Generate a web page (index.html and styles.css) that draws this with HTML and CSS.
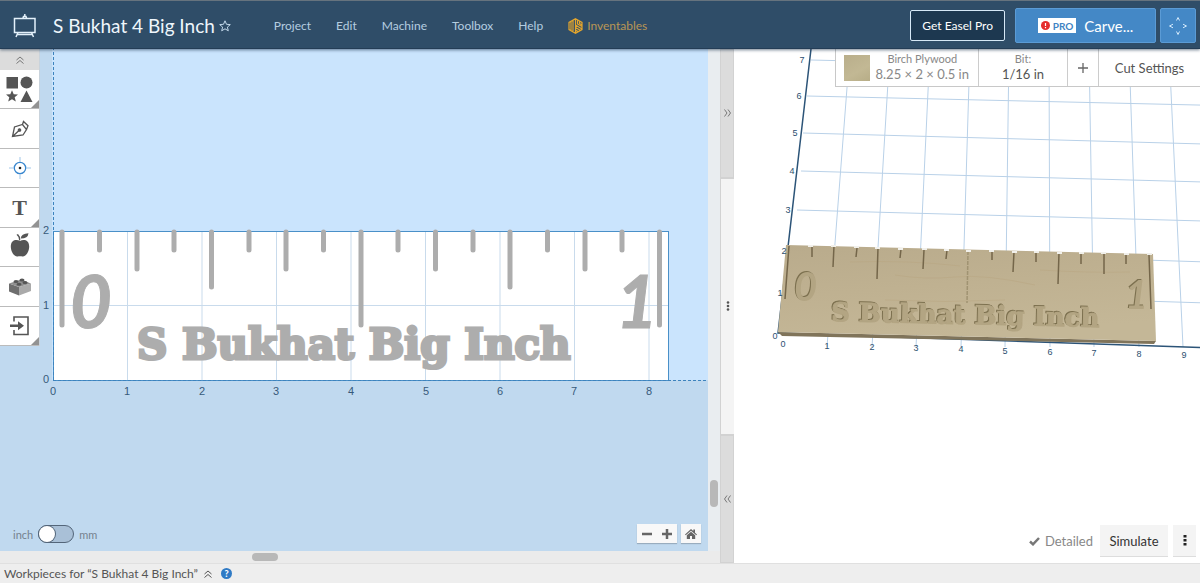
FILE: index.html
```html
<!DOCTYPE html>
<html lang="en">
<head>
<meta charset="utf-8">
<title>S Bukhat 4 Big Inch</title>
<link rel="stylesheet" href="styles.css">
</head>
<body>
<header class="topbar">
  <a class="logo" href="#" aria-label="Home">
    <svg width="24" height="24" viewBox="0 0 24 24" fill="none" stroke="#e4f1fb" stroke-width="1.5"><path d="M1.500 4.500h20.500v14H1.500zM10 4l.5-1.500h2.500l.5 1.500M11.800 0v3M5 18.500l-2 4.500M18.500 18.500l2 4.500M4 20.500h15.500"/></svg>
  </a>
  <h1 class="title">S Bukhat 4 Big Inch</h1>
  <button class="star" aria-label="Favorite"><svg width="12" height="12" viewBox="0 0 12 12" fill="none" stroke="#c3d9eb" stroke-linejoin="round"><path d="M6 .8l1.500 3.500 3.800.3-2.900 2.500.9 3.700L6 8.800l-3.300 2 .9-3.700L.7 4.600l3.800-.3z"/></svg></button>
  <nav class="menu">
    <a href="#">Project</a><a href="#">Edit</a><a href="#">Machine</a><a href="#">Toolbox</a><a href="#">Help</a>
    <a class="brand" href="#"><svg width="15" height="16" viewBox="0 0 15 16" fill="none" stroke="#e5a62c" stroke-width="1.200"><path d="M7.500.7l6.500 3.700v7.200l-6.500 3.700L1 11.600V4.400zM3 3.500v9M5 2.500v10.500M7.500 1v6l6.500 4M7.500 9.500l5 3M7.500 12l3.500 2M7.500 7.500V15M9.500 2.500v3.500l4.500 2.600M11.500 3.500v2l2.500 1.400"/></svg>Inventables</a>
  </nav>
  <div class="actions">
    <button class="pro-button">Get Easel Pro</button>
    <button class="carve"><span class="badge"><svg width="9" height="9" viewBox="0 0 9 9"><circle cx="4.500" cy="4.500" r="4.500" fill="#e52e2e"/><path d="M4.500 2v3M4.500 6v1.200" stroke="#fff" stroke-width="1.200"/></svg>PRO</span>Carve...</button>
    <button class="jog" aria-label="Jog machine"><svg width="18" height="18" viewBox="0 0 18 18" fill="none" stroke="#d3e9fb" stroke-width="1"><path d="M7.500 3.500L9 .5l1.500 3M7.500 14.500l1.500 3 1.500-3M4 7.200L.5 9 4 10.800M14 7.200L17.500 9 14 10.800"/></svg></button>
  </div>
</header>

<main class="workspace">
  <section class="editor">
    <div class="canvas">
      <svg class="drawing" width="100%" height="100%">
        <rect class="outside" width="100%" height="100%"/>
        <rect class="quadrant" x="52" y="0" width="100%" height="331"/>
        <g transform="translate(53 331)">
          <rect x="0" y="-149" width="615" height="149" fill="#fff"/>
          <path class="grid" d="M74.500-149V0M149-149V0M223.500-149V0M298-149V0M372.500-149V0M447-149V0M521.500-149V0M596-149V0M0-74.500H615"/>
          <rect class="stock" x="0" y="-149" width="615" height="149"/>
          <line class="axis" x1="0" y1="0" x2="0" y2="-340"/>
          <line class="axis" x1="0" y1="0" x2="100%" y2="0"/>
          <path class="ticks" d="M9-148v93M46.500-148v18M84-148v37M121-148v18M158.500-148v55M196-148v18M233-148v37M270.500-148v18M308-148v93M345-148v18M382.500-148v37M420-148v18M457-148v55M494.500-148v18M532-148v37M569-148v18M606.500-148v93"/>
          <text class="numeral" x="17" y="-52">0</text>
          <text class="numeral" x="563" y="-52">1</text>
          <text class="engraving" x="84" y="-21">S Bukhat Big Inch</text>
          <g class="scale across"><text x="0" y="15">0</text><text x="74" y="15">1</text><text x="149" y="15">2</text><text x="223" y="15">3</text><text x="298" y="15">4</text><text x="373" y="15">5</text><text x="447" y="15">6</text><text x="521" y="15">7</text><text x="596" y="15">8</text></g>
          <g class="scale up"><text x="-4" y="3">0</text><text x="-4" y="-71">1</text><text x="-4" y="-146">2</text></g>
        </g>
      </svg>

      <div class="toolbox">
        <button class="collapse" aria-label="Collapse tools"><svg width="8" height="8" viewBox="0 0 8 8" fill="none" stroke="#777"><path d="M.5 4L4 1l3.500 3M.5 7.500L4 4.500l3.500 3"/></svg></button>
        <button class="tool more" aria-label="Shapes"><svg width="27" height="27" viewBox="0 0 27 27" fill="#555"><path d="M.5 1h11.500v11.500H.5zM20.500 14.500l6 11.500h-12zM6 14.200l1.700 4 4.300.3-3.300 2.800 1.100 4.300L6 23.200l-3.800 2.400 1.100-4.300L0 18.500l4.300-.3z"/><circle cx="20.500" cy="6.500" r="6"/></svg></button>
        <button class="tool" aria-label="Pen"><svg width="18" height="18" viewBox="0 0 18 18" fill="none" stroke="#555" stroke-width="1.300"><path d="M1.500 16.500L3.500 7l8-2.500 4 5L12 15zM11.500 4.500l1-3 4.500 4.200-1.500 3.800M1.500 16.500L8 10.500"/><circle cx="8.500" cy="10" r="1.200" fill="#555"/></svg></button>
        <button class="tool" aria-label="Drill point"><svg width="22" height="22" viewBox="0 0 22 22" fill="none" stroke="#3987cf"><circle cx="11" cy="11" r="5.700" stroke-width="1.300"/><path stroke="#9fc5e8" d="M11 0v5M11 17v5M0 11h5M17 11h5"/><circle cx="11" cy="11" r="1.300" fill="#222" stroke="none"/></svg></button>
        <button class="tool more letter" aria-label="Text">T</button>
        <button class="tool" aria-label="Design library"><svg width="20" height="28" viewBox="0 0 20 28" fill="#555"><path d="M10 8C7 6 .8 6.300.8 13.500.8 19 4.500 24 7.500 23.500c1.500-.3 3.500-.3 5 0 3 .5 6.700-4.500 6.700-10C19.200 6.300 13 6 10 8zM9 7.500Q9.300 4 6.500 1.800L8 1q2.300 2 2.300 6zM10.800 5.500Q11 .8 18.500.3 18 5.500 10.800 5.500z"/></svg></button>
        <button class="tool" aria-label="Apps"><svg width="22" height="18" viewBox="0 0 22 18"><path fill="#6e6e6e" d="M0 5.500l10 3.500v8.500L0 13.500z"/><path fill="#aaa" d="M10 9l12-3.500V13l-12 4.500z"/><path fill="#8f8f8f" d="M0 5.500L12 1.500l10 4L10 9z"/><g fill="#555"><ellipse cx="7" cy="3.500" rx="2.500" ry="1.500"/><ellipse cx="13" cy="2" rx="2.500" ry="1.500"/><ellipse cx="10" cy="6.200" rx="2.500" ry="1.500"/><ellipse cx="16" cy="4.500" rx="2.500" ry="1.500"/></g></svg></button>
        <button class="tool more" aria-label="Import"><svg width="20" height="20" viewBox="0 0 20 20" fill="none" stroke="#555" stroke-width="1.600"><path d="M4 5.500V1h14v17.500H4V14"/><path fill="#555" stroke="none" d="M0 8.500h8V5.300l6 4.500-6 4.500v-3.200H0z"/></svg></button>
      </div>

      <div class="units">
        <label for="unit">inch</label>
        <input id="unit" class="switch" type="checkbox" role="switch">
        <label for="unit">mm</label>
      </div>

      <div class="zoom">
        <div class="zoom-pair">
          <button aria-label="Zoom out"><svg width="10" height="10"><path d="M0 5h10" stroke="#666" stroke-width="2.500"/></svg></button>
          <button aria-label="Zoom in"><svg width="10" height="10"><path d="M0 5h10M5 0v10" stroke="#666" stroke-width="2.500"/></svg></button>
        </div>
        <button class="home" aria-label="Reset view"><svg width="12" height="10" viewBox="0 0 12 10" fill="#666"><path d="M0 5.500L6 0l2.300 2V.5H10v3.200l2 1.800-.7.700L6 1.700.7 6.200zM1.800 6.200L6 2.700l4.200 3.500V10H7V7H5v3H1.800z"/></svg></button>
      </div>
    </div>
    <div class="track vertical"><span class="thumb"></span></div>
    <div class="track horizontal"><span class="thumb"></span></div>
    <div class="splitter">
      <button aria-label="Expand editor"><svg width="7" height="8" viewBox="0 0 7 8" fill="none" stroke="#777"><path d="M.5.500l2.500 3.500L.5 7.500M4 .5l2.500 3.500L4 7.500"/></svg></button>
      <button class="grip" aria-label="Resize panels"><svg width="4" height="10" fill="#555"><circle cx="2" cy="1.500" r="1.300"/><circle cx="2" cy="5" r="1.300"/><circle cx="2" cy="8.500" r="1.300"/></svg></button>
      <button aria-label="Expand preview"><svg width="7" height="8" viewBox="0 0 7 8" fill="none" stroke="#777"><path d="M3 .5L.5 4 3 7.500M6.500.500L4 4l2.500 3.500"/></svg></button>
    </div>
  </section>

  <section class="preview">
    <svg class="scene" width="100%" height="100%">
      <defs>
        <linearGradient id="wood" x1="0" y1="0" x2=".3" y2="1"><stop offset="0" stop-color="#b9ab8c"/><stop offset=".5" stop-color="#bfb191"/><stop offset="1" stop-color="#c4b797"/></linearGradient>
      </defs>
      <g transform="translate(-734 -49)">
        <path class="grid3d" d="M850 49L827 347M890 49L872 347M930 49L916 347M970 49L961 347M1009 49L1005 347M1049 49L1050 347M1089 49L1094 347M1129 49L1139 347M1169 49L1183 347M1209 49L1228 347M783 290L1240 304M788 249L1240 263M797 210L1240 222M801 171L1240 183M803 133L1240 145M807 96L1240 106M811 60L1240 70"/>
        <path class="axis3d" d="M811 49L778 333L1240 349"/>
        <path fill="#80745a" d="M778 332L1156 341L1154 344L782 336z"/>
        <path fill="url(#wood)" d="M786 245L1153 254L1156 341L778 332z"/>
        <path class="woodgrain" d="M895 275q30 5 60 2t80 8M850 262q60-2 110 4M1040 270q50 3 90 2M885 300q60 3 120 0"/>
        <path class="groove" d="M789 246L785 299M812 247V257M834 246L833 267M857 248L856 257M878 248L877 279M901 249L900 258M924 250L923 269M947 250L946 259M992 251V260M1014 252L1013 272M1036 252V262M1059 253L1058 284M1081 253V264M1104 254V274M1126 254V264M1149 255L1151 309"/>
        <path class="groove faint" d="M968 251L967 303"/>
        <path class="notch" d="M808 246h5M831 246h5M854 247h5M875 248h5M898 249h5M922 249h5M944 250h5M966 251h5M989 251h5M1012 252h5M1034 252h5M1057 253h5M1079 253h5M1101 253h5M1124 254h5M1147 254h5"/>
        <g class="carved">
          <text class="carved-num" x="794" y="301">0</text>
          <text class="carved-num" x="1125" y="309">1</text>
          <text class="carved-text" x="831" y="321" transform="rotate(1.300 831 321)">S Bukhat Big Inch</text>
        </g>
        <g class="scale3d">
          <text x="783" y="347">0</text><text x="827" y="349">1</text><text x="872" y="350">2</text><text x="916" y="351">3</text><text x="961" y="352">4</text><text x="1005" y="354">5</text><text x="1050" y="355">6</text><text x="1094" y="356">7</text><text x="1139" y="357">8</text><text x="1184" y="358">9</text>
          <text x="775" y="339">0</text><text x="780" y="296">1</text><text x="784" y="254">2</text><text x="788" y="213">3</text><text x="792" y="174">4</text><text x="795" y="136">5</text><text x="799" y="99">6</text><text x="802" y="63">7</text>
        </g>
      </g>
    </svg>
    <div class="settings">
      <button class="material"><span class="swatch"></span><span class="stack"><small>Birch Plywood</small><span>8.25 × 2 × 0.5 in</span></span></button>
      <button class="bit stack"><small>Bit:</small><span>1/16 in</span></button>
      <button class="add" aria-label="Add bit"><svg width="10" height="10"><path d="M0 5h10M5 0v10" stroke="#666" stroke-width="1.300"/></svg></button>
      <button class="cut">Cut Settings</button>
    </div>
    <div class="simulation">
      <button class="detailed"><svg width="11" height="9" viewBox="0 0 11 9" fill="none" stroke="#777" stroke-width="2.500"><path d="M1 4.500L4 7.300 10 1"/></svg>Detailed</button>
      <button class="simulate">Simulate</button>
      <button class="options" aria-label="More options"><svg width="4" height="11" fill="#222"><path d="M.5 0h3v2.600h-3zM.5 4h3v2.600h-3zM.5 8h3v2.600h-3z"/></svg></button>
    </div>
  </section>
</main>

<footer class="workpieces">
  <span>Workpieces for “S Bukhat 4 Big Inch”</span>
  <button aria-label="Expand workpieces"><svg width="8" height="8" viewBox="0 0 8 8" fill="none" stroke="#555"><path d="M.5 4L4 1l3.500 3M.5 7.500L4 4.500l3.500 3"/></svg></button>
  <button class="help" aria-label="Help">?</button>
</footer>
</body>
</html>
```
FILE: styles.css
```css
* { box-sizing: border-box; }
body {
  margin: 0;
  height: 100vh;
  display: flex;
  flex-direction: column;
  overflow: hidden;
  font-family: Lato, sans-serif;
  font-size: 13px;
  color: #555;
}
button {
  margin: 0;
  padding: 0;
  border: 0;
  background: none;
  color: inherit;
  font: inherit;
  display: flex;
  align-items: center;
  justify-content: center;
}
svg { display: block; flex: none; }

/* Header */
.topbar {
  flex: none;
  height: 49px;
  display: flex;
  align-items: center;
  padding: 2px 4px 0 13px;
  background: #2f4d68;
  border-top: 1px solid #66737e;
  border-bottom: 1px solid #243d56;
  box-shadow: 0 1px 3px rgba(20, 45, 70, .6);
  position: relative;
  z-index: 2;
}
.title {
  margin: 0 4px 0 16px;
  font-size: 19px;
  line-height: 24px;
  font-weight: 400;
  color: #eef6fc;
  white-space: nowrap;
}
.menu {
  display: flex;
  align-items: center;
  gap: 25px;
  margin-left: 43px;
  font-size: 12px;
}
.menu a { color: #b5cde0; text-decoration: none; }
.menu .brand {
  display: flex;
  align-items: center;
  gap: 4px;
  color: #b99655;
}
.actions { display: flex; align-items: center; margin-left: auto; }
.actions button { color: #fff; }
.pro-button {
  height: 31px;
  padding: 0 11px;
  margin-right: 10px;
  border: 1px solid #d6e8f6;
  border-radius: 2px;
  background: #1d3850;
  font-size: 12px;
}
.carve {
  width: 141px;
  height: 35px;
  margin-right: 4px;
  gap: 8px;
  border: 1px solid #5b9bd5;
  border-radius: 2px;
  background: #4488c6;
  font-size: 15px;
}
.badge {
  display: flex;
  align-items: center;
  gap: 3px;
  height: 15px;
  padding: 0 3px;
  background: #fff;
  color: #4084c4;
  font-size: 10px;
  font-weight: 700;
}
.jog {
  width: 36px;
  height: 35px;
  border: 1px solid #5b9bd5;
  border-radius: 2px;
  background: #4488c6;
}

/* Workspace */
.workspace {
  flex: 1;
  min-height: 0;
  display: grid;
  grid-template-columns: minmax(0, 734fr) minmax(0, 466fr);
}
.editor {
  display: grid;
  grid-template: minmax(0, 1fr) 12px / minmax(0, 1fr) 12px 14px;
  background: #e9ebed;
}
.canvas { position: relative; overflow: hidden; }
.drawing, .scene { position: absolute; inset: 0; }
.outside { fill: #c0d9ef; }
.quadrant { fill: #cae4fd; }
.grid { stroke: #c9dbec; fill: none; }
.stock { fill: none; stroke: #4a90c8; stroke-width: 1; shape-rendering: crispEdges; }
.axis { stroke: #3d83bd; stroke-dasharray: 3 2; shape-rendering: crispEdges; }
.ticks { stroke: #adadad; stroke-width: 5; stroke-linecap: round; }
.numeral {
  font: italic 700 72px Lato, sans-serif;
  fill: #adadad;
  stroke: #adadad;
  stroke-width: 1px;
}
.engraving {
  font: 700 42px "DejaVu Serif", serif;
  fill: #adadad;
  stroke: #adadad;
  stroke-width: 3px;
}
.scale { font: 11px "Liberation Sans", sans-serif; fill: #37597a; }
.across { text-anchor: middle; }
.up { text-anchor: end; }

.toolbox {
  position: absolute;
  left: 0;
  top: 0;
  width: 40px;
  display: flex;
  flex-direction: column;
  background: #fff;
  border-right: 1px solid #c9d3dc;
}
.collapse { height: 21px; background: #dcdcdc; }
.tool {
  height: 40px;
  border-bottom: 1px solid #bbb;
  position: relative;
}
.tool:nth-child(even) { height: 39px; }
.more::after {
  content: "";
  position: absolute;
  right: 0;
  bottom: 0;
  border: 4px solid #929292;
  border-left-color: transparent;
  border-top-color: transparent;
}
.letter { font: 700 22px "Liberation Serif", serif; }

.units {
  position: absolute;
  left: 13px;
  bottom: 8px;
  display: flex;
  align-items: center;
  gap: 5px;
  font-size: 11px;
  color: #75828e;
}
.switch {
  appearance: none;
  width: 36px;
  height: 18px;
  margin: 0;
  border: 1px solid #536579;
  border-radius: 9px;
  background: #a9c0d7;
}
.switch::before {
  content: "";
  display: block;
  width: 16px;
  height: 16px;
  border-radius: 8px;
  background: #fff;
  box-shadow: 0 0 0 1px #536579;
}
.switch:checked::before { margin-left: auto; }

.zoom {
  position: absolute;
  right: 7px;
  bottom: 8px;
  display: flex;
  gap: 4px;
}
.zoom button { width: 20px; height: 19px; background: #f8f8f8; }
.zoom-pair { display: flex; }
.zoom-pair, .home { box-shadow: 0 1px 1px rgba(0, 0, 0, .2); }

.track { display: flex; background: #e9edf0; }
.track .thumb { background: #b8b8b8; border-radius: 4px; }
.vertical { grid-column: 2; grid-row: 1; flex-direction: column; align-items: center; justify-content: flex-end; padding-bottom: 44px; }
.vertical .thumb { width: 8px; height: 27px; }
.horizontal { grid-column: 1 / 3; grid-row: 2; align-items: center; padding-left: 35%; background: #ebebeb; }
.horizontal .thumb { width: 26px; height: 8px; }
.splitter {
  grid-column: 3;
  grid-row: 1 / 3;
  display: grid;
  grid-template-rows: 1fr 2fr 1fr;
}
.splitter button { background: #dcdcdc; border: 1px solid #d2d2d2; }
.splitter .grip { background: #f4f4f4; border-right: 0; }

/* 3D preview */
.preview { position: relative; overflow: hidden; background: #fff; }
.grid3d { stroke: #b9d1e8; fill: none; }
.axis3d { stroke: #2c5478; stroke-width: 1.5; fill: none; }
.woodgrain { stroke: #b6a27d; stroke-width: 1; opacity: .4; fill: none; }
.groove { stroke: #74664a; stroke-width: 1.5; fill: none; }
.faint { stroke: #a09372; stroke-dasharray: 4 1; }
.notch { stroke: #f1f0eb; stroke-width: 2; fill: none; }
.carved {
  filter: drop-shadow(-1px -1px 0 #7c704f);
  fill: #b3a583;
}
.carved-num { font: italic 700 40px Lato, sans-serif; }
.carved-text {
  font: 700 26px "DejaVu Serif", serif;
  stroke: #b3a583;
  stroke-width: 1px;
}
.scale3d { font: 9px "Liberation Sans", sans-serif; fill: #2c4f70; text-anchor: middle; }

.settings {
  position: absolute;
  top: 0;
  right: 0;
  display: flex;
  height: 38px;
  background: #fff;
  border: 1px solid #c8c8c8;
  border-top: 0;
  border-right: 0;
}
.settings button { border-right: 1px solid #ccc; }
.stack { display: flex; flex-direction: column; line-height: 17px; font-size: 13px; }
.stack small { font-size: 11px; line-height: 14px; color: #888; }
.settings .material { padding: 0 9px 0 8px; gap: 6px; color: #888; }
.swatch { width: 26px; height: 26px; background: linear-gradient(150deg, #b9ae8b, #c2b894 60%, #b7ad87); }
.bit { width: 89px; }
.add { width: 31px; }
.settings .cut { width: 101px; border-right: 0; }

.simulation {
  position: absolute;
  right: 4px;
  bottom: 6px;
  display: flex;
  gap: 5px;
}
.simulation button { height: 32px; }
.detailed { gap: 5px; margin-right: 2px; color: #888; }
.simulation .simulate { width: 68px; background: #f4f4f4; color: #333; border-bottom: 1px solid #ddd; }
.simulation .options { width: 23px; background: #f4f4f4; border-bottom: 1px solid #ddd; }

/* Footer */
.workpieces {
  flex: none;
  height: 20px;
  padding: 0 4px;
  display: flex;
  align-items: center;
  gap: 6px;
  background: #eee;
  border-top: 1px solid #e0e0e0;
  font-size: 12px;
}
.help {
  width: 11px;
  height: 11px;
  margin-left: 3px;
  border-radius: 50%;
  background: #2f7ac5;
  color: #fff;
  font-size: 9px;
  font-weight: 900;
}
```
